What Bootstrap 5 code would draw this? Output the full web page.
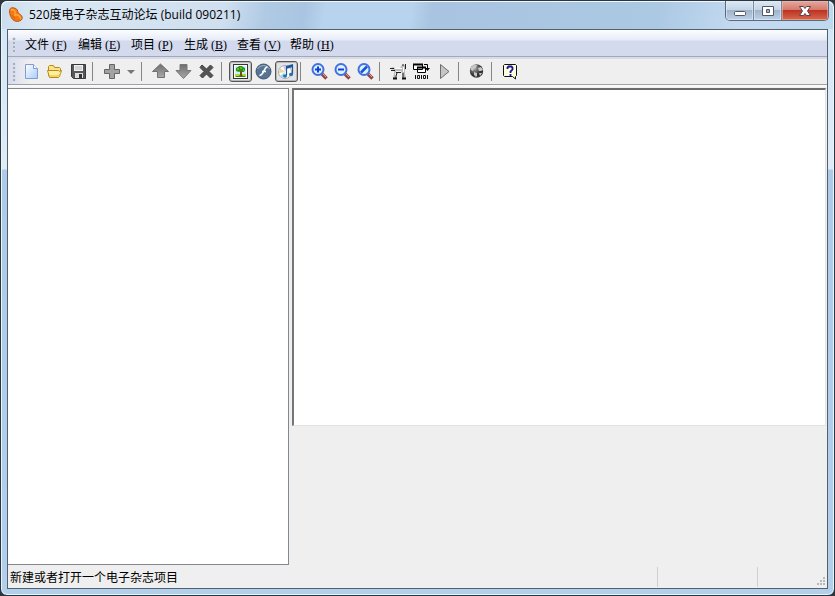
<!DOCTYPE html>
<html lang="zh-CN">
<head>
<meta charset="utf-8">
<meta name="viewport" content="width=device-width, initial-scale=1">
<title>520度电子杂志互动论坛 (build 090211)</title>
<link href="https://cdn.jsdelivr.net/npm/bootstrap@5.3.0/dist/css/bootstrap.min.css" rel="stylesheet">
<style>
body { background: #30363c; font: 12px/16px "Liberation Sans", "Noto Sans CJK SC", sans-serif; color: #000; }
.app-window { padding: 0 6px 6px; border: 1px solid #2b3640; border-radius: 7px; box-shadow: inset 0 0 0 1px #e8f5fd;
  background: linear-gradient(#d3e6f6 0, #dfecf8 168px, #adcbe9 169px, #b2cfec 100%); }
.title-bar { height: 28px; margin: 0 -5px; padding-left: 6px; border-radius: 6px 6px 0 0; box-shadow: inset 0 1px 0 #f0f8fd;
  background: linear-gradient(100deg, #c9dced 0, #dbe8f3 40px, #cfdfef 220px, #b0cae4 262px, #a9c5e1 300px, #b8d3ed 320px, #b8d3ed 405px, #a8c4e0 425px, #acc9e4 650px, #c4daf0 730px, #bfd8ee 100%); }
.title-text { font: 12px/20px "Open Sans", "Noto Sans CJK SC", sans-serif; margin: 0; padding-top: 4px; }
.caption-group { height: 20px; border: 1px solid #5c6b7b; border-top: 0; border-radius: 0 0 5px 5px; overflow: hidden; margin-right: 4px; }
.caption-btn { width: 28px; padding: 0; border: 0; border-right: 1px solid #7a8a9b; display: flex; align-items: center; justify-content: center;
  background: linear-gradient(#dce8f4 0, #c5d5e6 46%, #9fb4cb 50%, #bdd2e8 100%); box-shadow: inset 0 0 0 1px #e2edf799; }
.caption-close { width: 46px; border-right: 0; background: linear-gradient(#e5a99e 0, #d6796a 46%, #bb3423 50%, #d8684d 100%); box-shadow: inset 0 0 0 1px #f0b9ae99; }
.client { border: 1px solid #53616d; background: #efefef; min-height: 0; }
.menu-strip { height: 27px; border-bottom: 1px solid #a9a9ad; background: linear-gradient(#fcfdff 0, #e6ebf6 10px, #d4daee 11px, #d4daee 100%); }
.tool-strip { height: 28px; border-top: 2px solid #d6dcf0; border-bottom: 1px solid #a0a0a0; background: linear-gradient(90deg, #d6dcf0 0, #efefef 22px); }
.grip { width: 12px; align-self: stretch; margin: 3px 0 2px; background: radial-gradient(circle at 6px 2px, #a5adbf 1px, #fff 2px, transparent 2px) 0 0 / 12px 4px repeat-y; }
.menu-btn { padding: 0 5px; width: 53px; border: 0; background: none; text-align: left; white-space: nowrap; font-size: 12px; line-height: 20px; }
.menu-key { font: 12px/16px "Liberation Serif", serif; margin-left: 3px; }
.tool-btn { width: 23px; height: 21px; padding: 0; border: 0; background: none; display: flex; align-items: center; justify-content: center; }
.tool-btn.pressed { border: 1px solid #555; border-radius: 3px; background: #e1e3e7; box-shadow: inset 0 0 0 1px #b8b8b8; }
.tool-drop { width: 15px; }
.tool-sep { width: 11px; height: 19px; padding-left: 3px; }
.tool-sep.narrow { width: 9px; padding-left: 2px; }
.tool-sep::before { content: ""; display: block; width: 1px; height: 100%; background: #858585; }
.workspace { min-height: 0; gap: 3px; padding-top: 3px; background: linear-gradient(#fff 0, #efefef 3px); }
.tree-pane { width: 281px; background: #fff; border: 1px solid #828790; border-left: 0; }
.page-pane { height: 338px; background: #fff; border: 2px solid #6b6b6b; border-left-color: #777; border-right: 1px solid #e3e3e3; border-bottom: 1px solid #e3e3e3; margin-right: 1px; }
.status-strip { height: 23px; }
.status-text { padding-left: 2px; line-height: 20px; padding-top: 2px; }
.status-cell { width: 100px; height: 20px; border-left: 1px solid #d0d0d0; }
.status-end { width: 70px; }
</style>
<script src="https://cdn.jsdelivr.net/npm/bootstrap@5.3.0/dist/js/bootstrap.bundle.min.js"></script>
</head>
<body>
<div class="app-window vh-100 d-flex flex-column">
  <header class="title-bar d-flex align-items-start flex-shrink-0">
    <svg class="mt-1 me-1 flex-shrink-0" width="17" height="18" viewBox="0 0 17 18" aria-hidden="true"><path d="M1.500 7C1 3 4 2 6 3c3 0 4 3 4 5 2 1 5 3 4 6-1 2-4 3-7 2C4 15 2 11 1.500 7z" fill="#f47a16" stroke="#c4520d"/><path d="M3 5c3-1 5 1 4 5 3-1 5 1 6 4" fill="none" stroke="#ffa83c" stroke-width="1.400"/><path d="M4 10l3 4" stroke="#d55c0c"/></svg>
    <h1 class="title-text flex-grow-1 text-nowrap">520度电子杂志互动论坛 (build 090211)</h1>
    <div class="caption-group d-flex">
      <button class="caption-btn" type="button" aria-label="最小化"><svg width="14" height="14"><rect x="1.500" y="7.500" width="11" height="4" rx="1" fill="#fff" stroke="#535666"/></svg></button>
      <button class="caption-btn" type="button" aria-label="最大化"><svg width="14" height="14"><path d="M1.500 2.500h11v9h-11zM5.500 5.500v3h3v-3z" fill="#fff" fill-rule="evenodd" stroke="#535666"/></svg></button>
      <button class="caption-btn caption-close" type="button" aria-label="关闭"><svg width="14" height="14"><path d="M1.500 2.500h4L7 4.500l1.500-2h4L9.500 7l3 4.500h-4L7 9.500l-1.500 2h-4l3-4.500z" fill="#fff" stroke="#5d4148"/></svg></button>
    </div>
  </header>

  <main class="client flex-grow-1 d-flex flex-column">
    <nav class="menu-strip d-flex align-items-center flex-shrink-0 pt-1" aria-label="菜单">
      <span class="grip"></span>
      <button class="menu-btn" type="button">文件<span class="menu-key">(<u>F</u>)</span></button>
      <button class="menu-btn" type="button">编辑<span class="menu-key">(<u>E</u>)</span></button>
      <button class="menu-btn" type="button">项目<span class="menu-key">(<u>P</u>)</span></button>
      <button class="menu-btn" type="button">生成<span class="menu-key">(<u>B</u>)</span></button>
      <button class="menu-btn" type="button">查看<span class="menu-key">(<u>V</u>)</span></button>
      <button class="menu-btn" type="button">帮助<span class="menu-key">(<u>H</u>)</span></button>
    </nav>

    <div class="tool-strip d-flex align-items-center flex-shrink-0" role="toolbar" aria-label="工具栏">
      <span class="grip"></span>
      <button class="tool-btn" type="button" aria-label="新建"><svg width="17" height="17"><defs><linearGradient id="pg" x2="1" y2="1"><stop stop-color="#fff"/><stop offset="1" stop-color="#a9cbfa"/></linearGradient></defs><path d="M2.500 1.500h8l4 4v10h-12z" fill="url(#pg)" stroke="#7e9ed3"/><path d="M10.500 1.500v4h4" fill="#fff" stroke="#7e9ed3"/></svg></button>
      <button class="tool-btn" type="button" aria-label="打开"><svg width="17" height="17"><path d="M2.500 13V3.500l1-1h4l1 2h5l1 1V8" fill="#fbe38a" stroke="#b8881a"/><path d="M1.500 7.500h11l1 1 2-1-2 6-1 1h-9z" fill="#fff0a0" stroke="#b8881a"/><path d="M4 13h9l2-4" fill="none" stroke="#e7b928"/></svg></button>
      <button class="tool-btn" type="button" aria-label="保存"><svg width="17" height="17"><path d="M2.500 1.500h14v14h-12l-2-2z" fill="#55575a" stroke="#35373a"/><path d="M5 2h9v6H5z" fill="#f1f1f1"/><path d="M6 4h7M6 6h7" stroke="#b5b5b5"/><path d="M6 10h8v5H6z" fill="#ddd"/><path d="M10 11h3v4h-3z" fill="#333"/></svg></button>
      <span class="tool-sep"></span>
      <button class="tool-btn" type="button" aria-label="添加"><svg width="17" height="17"><path d="M6.500 1.500h5v5h5v4h-5v5h-5v-5h-5v-4h5z" fill="#a2a2a2" stroke="#646464"/></svg></button>
      <button class="tool-btn tool-drop" type="button" aria-label="添加选项"><svg width="9" height="6"><path d="M1 1h8L5 5z" fill="#777"/></svg></button>
      <span class="tool-sep"></span>
      <button class="tool-btn" type="button" aria-label="上移"><svg width="17" height="17"><defs><linearGradient id="gr" x2="0" y2="1"><stop stop-color="#6e6e6e"/><stop offset="1" stop-color="#aaa"/></linearGradient></defs><path d="M8.500 1l8 7.500h-4v6h-7v-6h-5z" fill="url(#gr)" stroke="#717171"/></svg></button>
      <button class="tool-btn" type="button" aria-label="下移"><svg width="17" height="17"><path d="M5 1.500h7v6h4l-7.500 8-7.500-8h4z" fill="url(#gr)" stroke="#777"/></svg></button>
      <button class="tool-btn" type="button" aria-label="删除"><svg width="17" height="17"><path d="M4 2L8.500 6l4-4L15 4.500l-4 4 4 4-2.500 2.500-4-4-4 4L2 12.500l4-4-4-4z" fill="#555" stroke="#3f3f3f"/></svg></button>
      <span class="tool-sep"></span>
      <button class="tool-btn pressed" type="button" aria-label="图片" aria-pressed="true"><svg width="17" height="17"><path d="M1 1h15v15H1z" fill="#333"/><path d="M2 2h13v13H2z" fill="#fff"/><path d="M3 3h11v8H3z" fill="#cdeeff"/><path d="M3 11h11v3H3z" fill="#a8df32"/><path d="M8 8h2v4l1 1H7l1-1z" fill="#7b4a15"/><path d="M4 8V5l2-1 1-1h3l1 1 2 1v2l-1 2h-2L9 8 7 9z" fill="#299313"/><path d="M5 6h2M8 5h2M11 7h1" stroke="#a6df32"/><path d="M4 13.500h9" stroke="#36821a"/></svg></button>
      <button class="tool-btn" type="button" aria-label="动画"><svg width="17" height="17"><circle cx="8.500" cy="8.500" r="7.500" fill="#587393" stroke="#41566e"/><path d="M2.500 6a7 7 0 0 1 12 0" fill="none" stroke="#a3b7ca"/><path d="M12.500 4c-4 0-3 8-8 8.500M7 8.500h4" fill="none" stroke="#fff" stroke-width="1.700"/></svg></button>
      <button class="tool-btn pressed" type="button" aria-label="音乐" aria-pressed="true"><svg width="17" height="17"><circle cx="7" cy="9" r="6.500" fill="#fff" stroke="#a3aab5"/><path d="M7 9L2 5l-1 5z" fill="#e8d69b"/><path d="M7 9l-5 4 3 2z" fill="#9adfeb"/><path d="M7 9L5 3l4 0z" fill="#d6cdee"/><path d="M8.500 12.500V3.500M14.500 11V2" fill="none" stroke="#1d579a" stroke-width="1.200"/><path d="M8 3l7-2v3L8 6z" fill="#1d579a"/><ellipse cx="7" cy="13" rx="2" ry="1.800" fill="#286fb3"/><ellipse cx="13" cy="11.500" rx="2" ry="1.800" fill="#286fb3"/></svg></button>
      <span class="tool-sep narrow"></span>
      <button class="tool-btn" type="button" aria-label="放大"><svg width="18" height="17"><path d="M12 11l4.500 4.500" stroke="#8d4948" stroke-width="3.500"/><path d="M13 11l3 3" stroke="#e5a29a"/><circle cx="8" cy="6.500" r="5.500" fill="#d9f3ff" stroke="#4270e2" stroke-width="2"/><path d="M5 6.500h6M8 3.500v6" stroke="#123ddc" stroke-width="2"/></svg></button>
      <button class="tool-btn" type="button" aria-label="缩小"><svg width="18" height="17"><path d="M12 11l4.500 4.500" stroke="#8d4948" stroke-width="3.500"/><path d="M13 11l3 3" stroke="#e5a29a"/><circle cx="8" cy="6.500" r="5.500" fill="#d9f3ff" stroke="#4270e2" stroke-width="2"/><path d="M5 6.500h6" stroke="#123ddc" stroke-width="2"/></svg></button>
      <button class="tool-btn" type="button" aria-label="实际大小"><svg width="18" height="17"><path d="M12 11l4.500 4.500" stroke="#8d4948" stroke-width="3.500"/><path d="M13 11l3 3" stroke="#e5a29a"/><circle cx="8" cy="6.500" r="5.500" fill="#d9f3ff" stroke="#4270e2" stroke-width="2"/><path d="M5 9.500l6-6" stroke="#1b50de" stroke-width="2.500"/></svg></button>
      <span class="tool-sep"></span>
      <button class="tool-btn" type="button" aria-label="检查"><svg width="17" height="17"><path d="M1 5l2-1 2 1h5l2-3h2l2-1v5l-1 1v4l1 4h-3l-1-5-1-2H6l-1 3 1 4H3l1-4V7L1 6z" fill="#bbb"/><path d="M0 5.500h4M1 7.500h4M6 9.500h5M12 2h2M15.500 1v5M13 10v6M7 10l-1 3v3" fill="none" stroke="#222"/><path d="M5 5.500h7M13.500 4v5" stroke="#fff"/><path d="M3 15.500h4M12 15.500h4" stroke="#111" stroke-width="2"/></svg></button>
      <button class="tool-btn" type="button" aria-label="编译"><svg width="17" height="17"><path d="M.500 1.500h9v5h-9zM4.500 4.500h8v5h-8z" fill="#fff" stroke="#000"/><path d="M0 1.500h10M4 4.500h9" stroke="#000" stroke-width="2"/><path d="M11 1.500h3.500V6" fill="none" stroke="#000"/><path d="M12 5h5l-2.500 3z"/><path d="M2.500 12v4M8.500 12v4M14.500 12v4" stroke="#111"/><path d="M4.500 12.500h2v3h-2zM10.500 12.500h2v3h-2z" fill="none" stroke="#111"/></svg></button>
      <button class="tool-btn" type="button" aria-label="预览"><svg width="17" height="17"><path d="M4.500 1.500l8.500 7-8.500 7z" fill="#c5c5c5" stroke="#6c6c6c"/></svg></button>
      <span class="tool-sep narrow"></span>
      <button class="tool-btn" type="button" aria-label="网站"><svg width="17" height="17"><defs><radialGradient id="gl" cx=".35" cy=".3"><stop stop-color="#aaa"/><stop offset="1" stop-color="#333"/></radialGradient></defs><circle cx="8.500" cy="8" r="6.700" fill="url(#gl)"/><path d="M3 4l3-2h3L8 5 6 6 5 8 3 7zM10 5l3-1 2 3-2 1-2 0zM6 9l3 1 0 3-1 1-2-2zM11 10l3 0-2 3z" fill="#c6c6c6"/></svg></button>
      <span class="tool-sep"></span>
      <button class="tool-btn" type="button" aria-label="帮助"><svg width="17" height="17"><path d="M2.500 1.500h11l1 1v10l-1 1v2.500l-3-2.500h-8l-1-1v-10z" fill="#fffde0" stroke="#111"/><path d="M5.500 6V4.500l1-1h3l1 1v2l-2 2V10M8.500 11v2" fill="none" stroke="#131393" stroke-width="1.800"/></svg></button>
    </div>

    <div class="workspace flex-grow-1 d-flex align-items-start">
      <section class="tree-pane align-self-stretch flex-shrink-0" aria-label="项目列表"></section>
      <section class="page-pane flex-grow-1" aria-label="页面预览"></section>
    </div>

    <footer class="status-strip d-flex align-items-center flex-shrink-0">
      <span class="flex-grow-1 text-nowrap status-text">新建或者打开一个电子杂志项目</span>
      <span class="status-cell flex-shrink-0"></span>
      <span class="status-cell status-end flex-shrink-0 d-flex justify-content-end align-items-end"><svg width="12" height="12" aria-hidden="true"><path d="M8 2h2v2H8zM5 5h2v2H5zM8 5h2v2H8zM2 8h2v2H2zM5 8h2v2H5zM8 8h2v2H8z" fill="#b9b9b9"/></svg></span>
    </footer>
  </main>
</div>
</body>
</html>
